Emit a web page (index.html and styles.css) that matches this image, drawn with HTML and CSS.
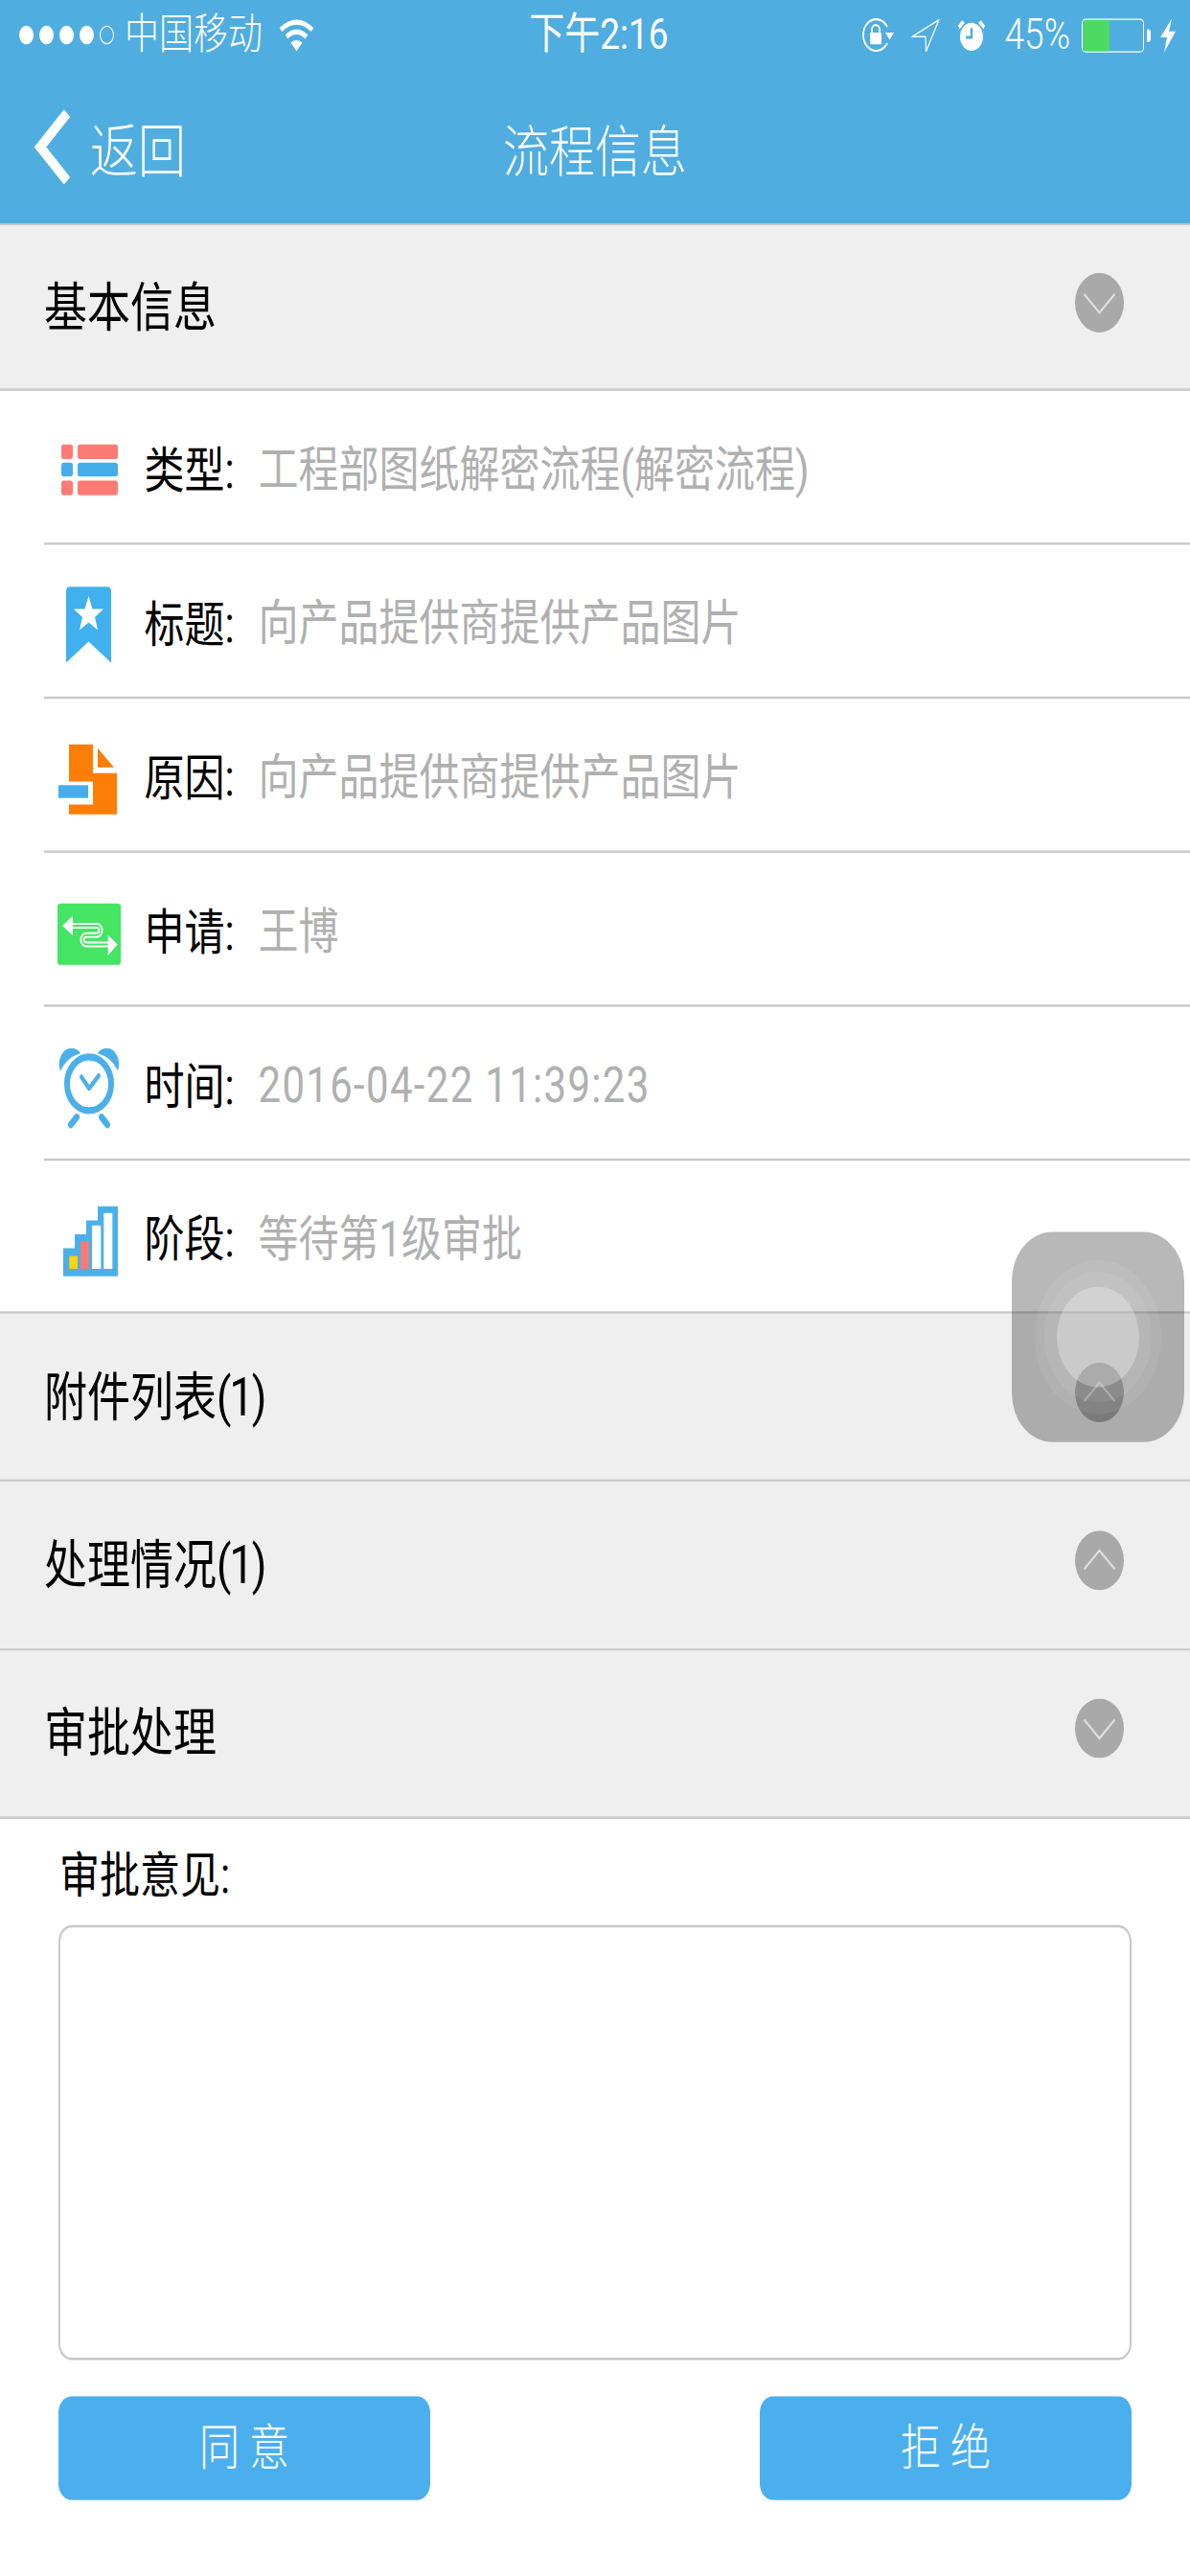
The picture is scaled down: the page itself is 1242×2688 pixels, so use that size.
FILE: index.html
```html
<!doctype html>
<html lang="zh-CN">
<head>
  <meta charset="UTF-8">
  <title>流程信息</title>
  <link rel="stylesheet" href="styles.css">
</head>
<body>
<div class="page">
  <div class="top">
    <div class="status">
      <div class="status-left">
        <span class="dots"><i></i><i></i><i></i><i></i><i class="off"></i></span>
        <span class="carrier">中国移动</span>
        <svg class="wifi" width="37" height="28" viewBox="0 0 37 28">
          <path d="M2 9.5Q18.5 -3.5 35 9.5M8 15.5Q18.5 7.5 29 15.5" fill="none" stroke="#fff" stroke-width="4.2"/>
          <path d="M12.5 20.5Q18.5 16.5 24.5 20.5L18.5 28Z" fill="#fff"/>
        </svg>
      </div>
      <div class="clock">下午2:16</div>
      <div class="status-right">
        <svg class="st-lock" width="36" height="30" viewBox="0 0 36 30">
          <path d="M28 8A13.5 13.5 0 1 0 28 22" fill="none" stroke="#fff" stroke-width="1.8"/>
          <path d="M26 13H35L30.5 19Z" fill="#fff"/>
          <rect x="10" y="13" width="12" height="10" rx="1" fill="#fff"/>
          <path d="M12 13V10.5a4 4 0 0 1 8 0V13" fill="none" stroke="#fff" stroke-width="1.8"/>
        </svg>
        <svg class="st-loc" width="30" height="29" viewBox="0 0 30 29">
          <path d="M29 1L1 15.5L15 15.5L15.5 28Z" fill="none" stroke="#fff" stroke-width="1.2" stroke-linejoin="round"/>
        </svg>
        <svg class="st-alarm" width="30" height="28" viewBox="0 0 30 28">
          <circle cx="15" cy="15.5" r="12" fill="#fff"/>
          <path d="M1 6L5 1.5L8 3.5L2.5 9ZM29 6L25 1.5L22 3.5L27.5 9Z" fill="#fff"/>
          <path d="M15 8V16H9" fill="none" stroke="#50ade0" stroke-width="2.4"/>
        </svg>
        <span class="percent">45%</span>
        <div class="battery"><div class="battery-fill" style="width:45%"></div></div>
        <div class="battery-cap"></div>
        <svg class="st-bolt" width="16" height="29" viewBox="0 0 16 29">
          <path d="M12 0L0 16H7L4 29L16 11H9Z" fill="#fff"/>
        </svg>
      </div>
    </div>
    <div class="nav">
      <a class="back" href="#">
        <svg width="40" height="64" viewBox="0 0 40 64">
          <path d="M35 3L7 32L35 61" fill="none" stroke="#fff" stroke-width="9"/>
        </svg>
        <span>返回</span>
      </a>
      <div class="nav-title">流程信息</div>
      <div></div>
    </div>
  </div>

  <div class="head head-first">
    <span>基本信息</span>
    <svg class="arrow" width="51" height="51" viewBox="0 0 51 51"><circle cx="25.500" cy="25.500" r="25.500" fill="#a9a9a9"/><path d="M9.500 18L25.500 34L41.500 18" fill="none" stroke="#dedede" stroke-width="2"/></svg>
  </div>

  <div class="rows">
    <div class="row">
      <svg class="icon" width="70" height="80" viewBox="0 0 70 80">
        <rect x="8" y="21" width="12" height="12.500" rx="2.500" fill="#fd7b73"/>
        <rect x="25" y="21" width="42" height="12.500" rx="2.500" fill="#fd7b73"/>
        <rect x="8" y="36.500" width="12" height="12" rx="2.500" fill="#45aeea"/>
        <rect x="25" y="36.500" width="42" height="12" rx="2.500" fill="#45aeea"/>
        <rect x="8" y="52" width="12" height="12.500" rx="2.500" fill="#fd7b73"/>
        <rect x="25" y="52" width="42" height="12.500" rx="2.500" fill="#fd7b73"/>
      </svg>
      <span class="label">类型:</span>
      <span class="value">工程部图纸解密流程(解密流程)</span>
    </div>
    <div class="row">
      <svg class="icon" width="70" height="80" viewBox="0 0 70 80">
        <path d="M13 15Q13 11 17 11H56Q60 11 60 15V76L36.500 58L13 76Z" fill="#41b0ee"/>
        <path d="M36.500 19L40.500 30L52 30L43 37L46 48L36.500 41.500L27 48L30 37L21 30L32.500 30Z" fill="#fff"/>
      </svg>
      <span class="label">标题:</span>
      <span class="value">向产品提供商提供产品图片</span>
    </div>
    <div class="row">
      <svg class="icon" width="70" height="80" viewBox="0 0 70 80">
        <path d="M16 14H41V38.700H66V74H16V65.600H41V45.900H16Z" fill="#fd7e06"/>
        <path d="M46 17.400L63 33.800H46Z" fill="#fd7e06"/>
        <rect x="5" y="49" width="31" height="11" fill="#45aeea"/>
      </svg>
      <span class="label">原因:</span>
      <span class="value">向产品提供商提供产品图片</span>
    </div>
    <div class="row">
      <svg class="icon" width="70" height="80" viewBox="0 0 70 80">
        <rect x="4" y="18.400" width="66" height="52.600" rx="3" fill="#43e563"/>
        <path d="M20 37.500H45a4 4 0 0 1 0 8H34a4 4 0 0 0 0 8H57" fill="none" stroke="#fff" stroke-width="5"/>
        <path d="M20 37.500H45a4 4 0 0 1 0 8H34a4 4 0 0 0 0 8H57" fill="none" stroke="#43e563" stroke-width="1.500"/>
        <path d="M9 37.500L20 29V46ZM66.700 53.500L56.700 45.500V63Z" fill="#fff"/>
      </svg>
      <span class="label">申请:</span>
      <span class="value">王博</span>
    </div>
    <div class="row">
      <svg class="icon" width="70" height="80" viewBox="0 0 70 80">
        <circle cx="37" cy="41" r="23" fill="none" stroke="#4bb0ea" stroke-width="6"/>
        <path d="M7 30C3 20 10 10 19 10.500C24 11 27 13 28 15C18 17 11 23 7 30Z" fill="#4bb0ea"/>
        <path d="M67 30C71 20 64 10 55 10.500C50 11 47 13 46 15C56 17 63 23 67 30Z" fill="#4bb0ea"/>
        <path d="M29 35L37 45L47 34" fill="none" stroke="#4bb0ea" stroke-width="4" stroke-linecap="round" stroke-linejoin="round"/>
        <path d="M24 69.600L18 76M50 69.600L56 76" fill="none" stroke="#4bb0ea" stroke-width="6" stroke-linecap="round"/>
      </svg>
      <span class="label">时间:</span>
      <span class="value num">2016-04-22 11:39:23</span>
    </div>
    <div class="row row-last">
      <svg class="icon" width="70" height="80" viewBox="0 0 70 80">
        <path d="M10 74V50H22V38H34V26H46V14H67V74Z" fill="#4bb0ea"/>
        <rect x="16.300" y="56.500" width="8.700" height="11.100" fill="#fdd20e"/>
        <rect x="28.300" y="44" width="8.400" height="23.600" fill="#fd7b73"/>
        <rect x="40" y="30.400" width="9.300" height="37.200" fill="#fff"/>
        <rect x="52.300" y="19.800" width="9" height="47.800" fill="#fff"/>
      </svg>
      <span class="label">阶段:</span>
      <span class="value">等待第1级审批</span>
    </div>
  </div>

  <div class="head">
    <span>附件列表<span class="count">(1)</span></span>
    <svg class="arrow" width="51" height="51" viewBox="0 0 51 51"><circle cx="25.500" cy="25.500" r="25.500" fill="#a9a9a9"/><path d="M9.500 33L25.500 17L41.500 33" fill="none" stroke="#dedede" stroke-width="2"/></svg>
  </div>
  <div class="head">
    <span>处理情况<span class="count">(1)</span></span>
    <svg class="arrow" width="51" height="51" viewBox="0 0 51 51"><circle cx="25.500" cy="25.500" r="25.500" fill="#a9a9a9"/><path d="M9.500 33L25.500 17L41.500 33" fill="none" stroke="#dedede" stroke-width="2"/></svg>
  </div>
  <div class="head">
    <span>审批处理</span>
    <svg class="arrow" width="51" height="51" viewBox="0 0 51 51"><circle cx="25.500" cy="25.500" r="25.500" fill="#a9a9a9"/><path d="M9.500 18L25.500 34L41.500 18" fill="none" stroke="#dedede" stroke-width="2"/></svg>
  </div>

  <div class="approve">
    <div class="approve-label">审批意见:</div>
    <textarea class="approve-text"></textarea>
    <div class="btns">
      <a class="btn" href="#">同意</a>
      <a class="btn" href="#">拒绝</a>
    </div>
  </div>

  <!-- assistive touch -->
  <div class="touch">
    <div class="ring ring1"></div>
    <div class="ring ring2"></div>
    <div class="ring ring3"></div>
  </div>
</div>
</body>
</html>
```

FILE: styles.css
```css
html {
  height: 2688px;
  overflow: hidden;
}
body {
  height: 2688px;
  margin: 0;
  padding: 0;
  background: #fff;
}
/* the shot is a 1242x2208 screen stretched to 2688 high */
.page {
  position: relative;
  width: 1242px;
  height: 2208px;
  transform: scaleY(1.21739);
  transform-origin: 0 0;
  font-family: Roboto, "Noto Sans CJK SC", sans-serif;
  color: #000;
}
.top {
  background: #50ade0;
  color: #fff;
}
.status {
  height: 60px;
  display: grid;
  grid-template-columns: 1fr auto 1fr;
  align-items: center;
  padding: 0 15px 0 20px;
}
.status-left, .status-right {
  display: flex;
  align-items: center;
}
.status-right {
  justify-content: flex-end;
}
.dots {
  display: flex;
  gap: 6px;
}
.dots i {
  display: block;
  width: 15px;
  height: 16px;
  border-radius: 50%;
  background: #fff;
}
.dots i.off {
  background: none;
  border: 1px solid #fff;
  box-sizing: border-box;
}
.carrier {
  margin-left: 11px;
  font-size: 36px;
  line-height: 60px;
  font-weight: 300;
}
.wifi {
  margin-left: 17px;
}
.clock {
  font-size: 37px;
  line-height: 60px;
  padding-left: 3px;
}
.st-lock {
  margin-right: 17px;
}
.st-loc {
  margin-right: 18px;
}
.st-alarm {
  margin-right: 20px;
}
.percent {
  font-size: 37px;
  font-weight: 300;
  line-height: 60px;
}
.battery {
  width: 65px;
  height: 29px;
  margin-left: 12px;
  box-sizing: border-box;
  border: 1.5px solid #fff;
  border-radius: 4px;
  overflow: hidden;
}
.battery-fill {
  height: 100%;
  background: #4cd964;
}
.battery-cap {
  width: 4px;
  height: 11px;
  margin-left: 3px;
  background: #fff;
  border-radius: 0 3px 3px 0;
}
.st-bolt {
  margin-left: 10px;
}
.nav {
  height: 132px;
  display: grid;
  grid-template-columns: 1fr auto 1fr;
  align-items: center;
  padding-left: 35px;
}
.back {
  display: flex;
  align-items: center;
  gap: 19px;
  color: #fff;
  text-decoration: none;
  font-size: 50px;
  font-weight: 300;
}
.nav-title {
  font-size: 48px;
  font-weight: 300;
  padding-right: 35px;
}
.head {
  height: 144.3px;
  box-sizing: border-box;
  padding: 0 69px 8px 46px;
  display: flex;
  align-items: center;
  justify-content: space-between;
  background: #efefef;
  border-bottom: 2px solid #c9c9c9;
  font-size: 45px;
}
.head-first {
  height: 143px;
  border-top: 1px solid #c4c4c4;
}
.count {
  letter-spacing: -2px;
}
.rows {
  padding-left: 46px;
}
.row {
  height: 132px;
  box-sizing: border-box;
  display: flex;
  align-items: center;
  padding-left: 10px;
  border-bottom: 2px solid #c9c9c9;
  font-size: 42px;
}
.row-last {
  height: 131px;
  margin-left: -46px;
  padding-left: 56px;
}
.icon {
  flex: none;
  overflow: visible;
  margin-right: 24.5px;
}
.label {
  width: 119px;
  flex: none;
  padding-bottom: 2px;
}
.value {
  color: #b0b0b0;
  padding-bottom: 3px;
}
.num {
  letter-spacing: 1.3px;
  padding: 4px 0 0;
}
.approve {
  padding: 19px 61px 0;
}
.approve-label {
  font-size: 42px;
  line-height: 60px;
  padding-left: 1px;
}
.approve-text {
  display: block;
  width: 100%;
  height: 373px;
  margin: 12px 0 0;
  box-sizing: border-box;
  border: 2px solid #c8c8c8;
  border-radius: 14px;
  background: #fff;
  resize: none;
  outline: 0;
}
.btns {
  display: flex;
  justify-content: space-between;
  margin-top: 31px;
}
.btn {
  width: 388px;
  height: 89px;
  line-height: 89px;
  border-radius: 14px;
  background: #4bafee;
  color: #fff;
  font-size: 42px;
  font-weight: 300;
  text-align: center;
  text-decoration: none;
  letter-spacing: 10px;
  text-indent: 10px;
}
.touch {
  position: absolute;
  left: 1056px;
  top: 1056px;
  width: 180px;
  height: 180px;
  border-radius: 42px;
  background: rgba(0, 0, 0, 0.28);
}
.ring {
  position: absolute;
  border-radius: 50%;
  background: rgba(255, 255, 255, 0.07);
}
.ring1 {
  left: 24px;
  top: 24px;
  width: 132px;
  height: 132px;
}
.ring2 {
  left: 34px;
  top: 34px;
  width: 112px;
  height: 112px;
}
.ring3 {
  left: 47px;
  top: 47px;
  width: 86px;
  height: 86px;
  background: rgba(255, 255, 255, 0.28);
}
```
